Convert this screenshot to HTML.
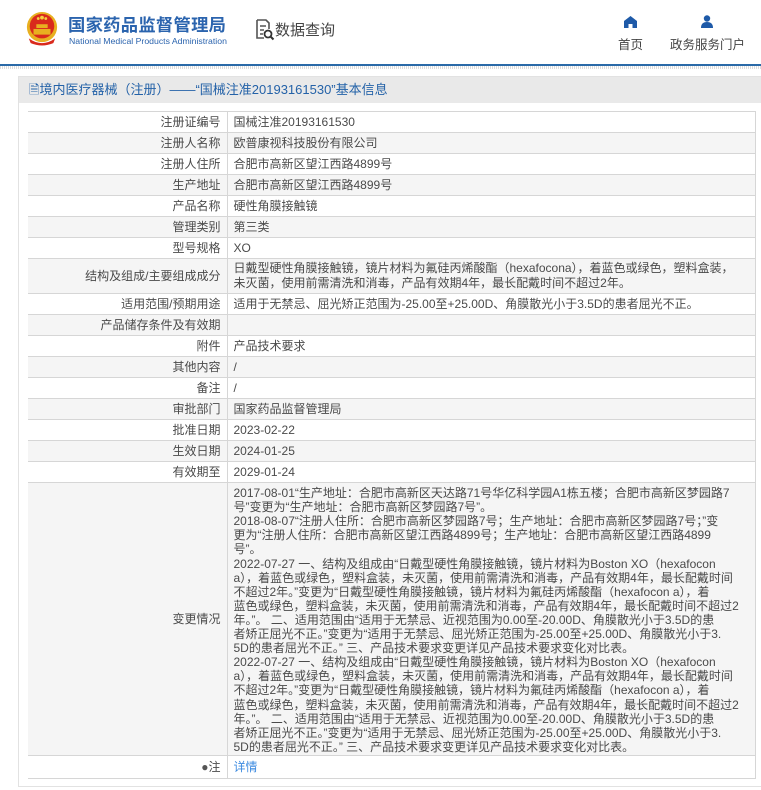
<!DOCTYPE html>
<html><head><meta charset="utf-8">
<style>
*{margin:0;padding:0;box-sizing:border-box}
body{width:761px;height:790px;background:#fff;font-family:"Liberation Sans","Noto Sans CJK SC",sans-serif;color:#444;position:relative;overflow:hidden}
.abs{position:absolute}
.title{left:68px;top:11px;font-size:17.3px;font-weight:bold;color:#2b64ae;letter-spacing:0.3px;white-space:nowrap}
.sub{left:69px;top:36px;font-size:8.7px;color:#2b64ae;white-space:nowrap}
.nav{font-size:12.5px;color:#444;white-space:nowrap}
.line{left:0;top:64px;width:761px;height:2px;background:#2a6aa8}
.hatch{left:0;top:66px;width:761px;height:3px;background:repeating-linear-gradient(90deg,#ddd 0 1px,#fff 1px 2px)}
.panel{left:18px;top:76px;width:745px;height:711px;border:1px solid #e2e2e2;background:#fff}
.hd{left:19px;top:77px;width:742px;height:26px;background:#e9e9e9;color:#2462a8;font-size:13px;line-height:26px;padding-left:10px;white-space:nowrap}
table{position:absolute;left:28px;top:111px;width:728px;border-collapse:collapse;font-size:12px;color:#4a4a4a}
td{border:1px solid #d6d6d6;height:21px;padding:0 6px;white-space:nowrap;line-height:15px}
td.l{width:199px;text-align:right;border-left:none}
tr:nth-child(even) td{background:#f5f5f5}
td.ml{white-space:nowrap;padding-top:1px;padding-bottom:1px}
td.ch{line-height:14.1px;padding-top:3px;padding-bottom:1px}
</style></head><body>
<svg class="abs" style="left:25px;top:10px" width="34" height="36" viewBox="0 0 36 38">
<circle cx="18" cy="18" r="16" fill="#e8b020"/>
<circle cx="18" cy="17" r="13" fill="#d92a1c"/>
<rect x="9" y="20" width="18" height="6" fill="#e8b020"/>
<rect x="12" y="15" width="12" height="4" fill="#e8b020"/>
<path d="M4 30 Q18 40 32 30 L30 35 Q18 40 6 35Z" fill="#d92a1c"/>
<circle cx="14" cy="9" r="1.5" fill="#f5d040"/><circle cx="18" cy="8" r="2" fill="#f5d040"/><circle cx="22" cy="9" r="1.5" fill="#f5d040"/>
</svg>
<div class="abs title">国家药品监督管理局</div>
<div class="abs sub">National Medical Products Administration</div>
<svg class="abs" style="left:255px;top:19px" width="20" height="22" viewBox="0 0 20 22">
<path d="M2 1h9l3 3v6M2 1v18h7" fill="none" stroke="#555" stroke-width="1.6"/>
<path d="M5 7h6M5 11h4M5 15h3" stroke="#555" stroke-width="1.4"/>
<circle cx="13" cy="15" r="3.5" fill="none" stroke="#333" stroke-width="1.8"/>
<path d="M15.5 17.5l3 3" stroke="#333" stroke-width="2"/>
</svg>
<div class="abs" style="left:275px;top:19px;font-size:15px;color:#444;white-space:nowrap">数据查询</div>
<svg class="abs" style="left:624px;top:16px" width="13" height="12" viewBox="0 0 13 12"><path d="M6.5 0L0 5v7h4.5V8h4v4H13V5z" fill="#1e5aa8"/></svg>
<svg class="abs" style="left:701px;top:15px" width="12" height="13" viewBox="0 0 12 13"><circle cx="6" cy="3.5" r="3.2" fill="#1e5aa8"/><path d="M0 13Q0 7 6 7Q12 7 12 13z" fill="#1e5aa8"/></svg>
<div class="abs nav" style="left:618px;top:34px">首页</div>
<div class="abs nav" style="left:670px;top:34px">政务服务门户</div>
<div class="abs line"></div><div class="abs hatch"></div>
<div class="abs panel"></div>
<div class="abs hd">&#128462;境内医疗器械（注册）——“国械注准20193161530”基本信息</div>
<table>
<tr><td class="l">注册证编号</td><td>国械注准20193161530</td></tr>
<tr><td class="l">注册人名称</td><td>欧普康视科技股份有限公司</td></tr>
<tr><td class="l">注册人住所</td><td>合肥市高新区望江西路4899号</td></tr>
<tr><td class="l">生产地址</td><td>合肥市高新区望江西路4899号</td></tr>
<tr><td class="l">产品名称</td><td>硬性角膜接触镜</td></tr>
<tr><td class="l">管理类别</td><td>第三类</td></tr>
<tr><td class="l">型号规格</td><td>XO</td></tr>
<tr><td class="l" style="height:35px">结构及组成/主要组成成分</td><td class="ml">日戴型硬性角膜接触镜，镜片材料为氟硅丙烯酸酯（hexafocona），着蓝色或绿色，塑料盒装，<br>未灭菌，使用前需清洗和消毒，产品有效期4年，最长配戴时间不超过2年。</td></tr>
<tr><td class="l">适用范围/预期用途</td><td>适用于无禁忌、屈光矫正范围为-25.00至+25.00D、角膜散光小于3.5D的患者屈光不正。</td></tr>
<tr><td class="l">产品储存条件及有效期</td><td></td></tr>
<tr><td class="l">附件</td><td>产品技术要求</td></tr>
<tr><td class="l">其他内容</td><td>/</td></tr>
<tr><td class="l">备注</td><td>/</td></tr>
<tr><td class="l">审批部门</td><td>国家药品监督管理局</td></tr>
<tr><td class="l">批准日期</td><td>2023-02-22</td></tr>
<tr><td class="l">生效日期</td><td>2024-01-25</td></tr>
<tr><td class="l">有效期至</td><td>2029-01-24</td></tr>
<tr><td class="l" style="height:273px">变更情况</td><td class="ch">2017-08-01“生产地址：合肥市高新区天达路71号华亿科学园A1栋五楼；合肥市高新区梦园路7<br>号”变更为“生产地址：合肥市高新区梦园路7号”。<br>2018-08-07“注册人住所：合肥市高新区梦园路7号；生产地址：合肥市高新区梦园路7号；”变<br>更为“注册人住所：合肥市高新区望江西路4899号；生产地址：合肥市高新区望江西路4899<br>号”。<br>2022-07-27 一、结构及组成由“日戴型硬性角膜接触镜，镜片材料为Boston XO（hexafocon<br>a），着蓝色或绿色，塑料盒装，未灭菌，使用前需清洗和消毒，产品有效期4年，最长配戴时间<br>不超过2年。”变更为“日戴型硬性角膜接触镜，镜片材料为氟硅丙烯酸酯（hexafocon a），着<br>蓝色或绿色，塑料盒装，未灭菌，使用前需清洗和消毒，产品有效期4年，最长配戴时间不超过2<br>年。”。 二、适用范围由“适用于无禁忌、近视范围为0.00至-20.00D、角膜散光小于3.5D的患<br>者矫正屈光不正。”变更为“适用于无禁忌、屈光矫正范围为-25.00至+25.00D、角膜散光小于3.<br>5D的患者屈光不正。” 三、产品技术要求变更详见产品技术要求变化对比表。<br>2022-07-27 一、结构及组成由“日戴型硬性角膜接触镜，镜片材料为Boston XO（hexafocon<br>a），着蓝色或绿色，塑料盒装，未灭菌，使用前需清洗和消毒，产品有效期4年，最长配戴时间<br>不超过2年。”变更为“日戴型硬性角膜接触镜，镜片材料为氟硅丙烯酸酯（hexafocon a），着<br>蓝色或绿色，塑料盒装，未灭菌，使用前需清洗和消毒，产品有效期4年，最长配戴时间不超过2<br>年。”。 二、适用范围由“适用于无禁忌、近视范围为0.00至-20.00D、角膜散光小于3.5D的患<br>者矫正屈光不正。”变更为“适用于无禁忌、屈光矫正范围为-25.00至+25.00D、角膜散光小于3.<br>5D的患者屈光不正。” 三、产品技术要求变更详见产品技术要求变化对比表。</td></tr>
<tr><td class="l" style="height:23px"><span style="color:#555">&#9679;</span>注</td><td style="color:#3d8be0">详情</td></tr>
</table>
</body></html>
